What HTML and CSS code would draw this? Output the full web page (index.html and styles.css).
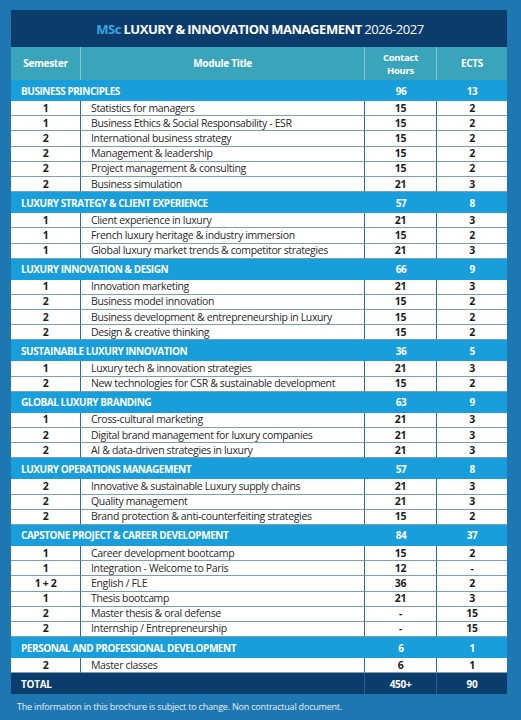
FILE: index.html
```html
<!DOCTYPE html>
<html lang="en">
<head>
<meta charset="utf-8">
<title>MSc Luxury &amp; Innovation Management 2026-2027</title>
<link rel="stylesheet" href="styles.css">
</head>
<body>
<div class="page">
  <table class="curriculum">
    <colgroup>
      <col class="c-sem"><col class="c-mod"><col class="c-hrs"><col class="c-ects">
    </colgroup>
    <thead>
      <tr class="title-row">
        <th colspan="4"><span class="msc">MSc</span> <span class="prog">LUXURY &amp; INNOVATION MANAGEMENT</span> <span class="year">2026-2027</span></th>
      </tr>
      <tr class="head-row">
        <th>Semester</th>
        <th>Module Title</th>
        <th><span class="hl">Contact</span><span class="hl">Hours</span></th>
        <th>ECTS</th>
      </tr>
    </thead>
    <tbody>
      <tr class="sec"><td colspan="2">BUSINESS PRINCIPLES</td><td>96</td><td>13</td></tr>
      <tr class="row"><td>1</td><td>Statistics for managers</td><td>15</td><td>2</td></tr>
      <tr class="row"><td>1</td><td>Business Ethics &amp; Social Responsability - ESR</td><td>15</td><td>2</td></tr>
      <tr class="row"><td>2</td><td>International business strategy</td><td>15</td><td>2</td></tr>
      <tr class="row"><td>2</td><td>Management &amp; leadership</td><td>15</td><td>2</td></tr>
      <tr class="row"><td>2</td><td>Project management &amp; consulting</td><td>15</td><td>2</td></tr>
      <tr class="row"><td>2</td><td>Business simulation</td><td>21</td><td>3</td></tr>

      <tr class="sec"><td colspan="2">LUXURY STRATEGY &amp; CLIENT EXPERIENCE</td><td>57</td><td>8</td></tr>
      <tr class="row"><td>1</td><td>Client experience in luxury</td><td>21</td><td>3</td></tr>
      <tr class="row"><td>1</td><td>French luxury heritage &amp; industry immersion</td><td>15</td><td>2</td></tr>
      <tr class="row"><td>1</td><td>Global luxury market trends &amp; competitor strategies</td><td>21</td><td>3</td></tr>

      <tr class="sec"><td colspan="2">LUXURY INNOVATION &amp; DESIGN</td><td>66</td><td>9</td></tr>
      <tr class="row"><td>1</td><td>Innovation marketing</td><td>21</td><td>3</td></tr>
      <tr class="row"><td>2</td><td>Business model innovation</td><td>15</td><td>2</td></tr>
      <tr class="row"><td>2</td><td>Business development &amp; entrepreneurship in Luxury</td><td>15</td><td>2</td></tr>
      <tr class="row"><td>2</td><td>Design &amp; creative thinking</td><td>15</td><td>2</td></tr>

      <tr class="sec"><td colspan="2">SUSTAINABLE LUXURY INNOVATION</td><td>36</td><td>5</td></tr>
      <tr class="row"><td>1</td><td>Luxury tech &amp; innovation strategies</td><td>21</td><td>3</td></tr>
      <tr class="row"><td>2</td><td>New technologies for CSR &amp; sustainable development</td><td>15</td><td>2</td></tr>

      <tr class="sec"><td colspan="2">GLOBAL LUXURY BRANDING</td><td>63</td><td>9</td></tr>
      <tr class="row"><td>1</td><td>Cross-cultural marketing</td><td>21</td><td>3</td></tr>
      <tr class="row"><td>2</td><td>Digital brand management for luxury companies</td><td>21</td><td>3</td></tr>
      <tr class="row"><td>2</td><td>AI &amp; data-driven strategies in luxury</td><td>21</td><td>3</td></tr>

      <tr class="sec"><td colspan="2">LUXURY OPERATIONS MANAGEMENT</td><td>57</td><td>8</td></tr>
      <tr class="row"><td>2</td><td>Innovative &amp; sustainable Luxury supply chains</td><td>21</td><td>3</td></tr>
      <tr class="row"><td>2</td><td>Quality management</td><td>21</td><td>3</td></tr>
      <tr class="row"><td>2</td><td>Brand protection &amp; anti-counterfeiting strategies</td><td>15</td><td>2</td></tr>

      <tr class="sec"><td colspan="2">CAPSTONE PROJECT &amp; CAREER DEVELOPMENT</td><td>84</td><td>37</td></tr>
      <tr class="row"><td>1</td><td>Career development bootcamp</td><td>15</td><td>2</td></tr>
      <tr class="row"><td>1</td><td>Integration - Welcome to Paris</td><td>12</td><td>-</td></tr>
      <tr class="row"><td>1 + 2</td><td>English / FLE</td><td>36</td><td>2</td></tr>
      <tr class="row"><td>1</td><td>Thesis bootcamp</td><td>21</td><td>3</td></tr>
      <tr class="row"><td>2</td><td>Master thesis &amp; oral defense</td><td>-</td><td>15</td></tr>
      <tr class="row"><td>2</td><td>Internship / Entrepreneurship</td><td>-</td><td>15</td></tr>

      <tr class="sec"><td colspan="2">PERSONAL AND PROFESSIONAL DEVELOPMENT</td><td>6</td><td>1</td></tr>
      <tr class="row"><td>2</td><td>Master classes</td><td>6</td><td>1</td></tr>
    </tbody>
    <tfoot>
      <tr class="total"><td colspan="2">TOTAL</td><td>450+</td><td>90</td></tr>
    </tfoot>
  </table>
  <p class="note">The information in this brochure is subject to change. Non contractual document.</p>
</div>
</body>
</html>
```

FILE: styles.css
```css
html, body {
  margin: 0;
  padding: 0;
}
body {
  background: #1f77b2;
  font-family: "Open Sans", "Noto Sans", "Liberation Sans", sans-serif;
  color: #222;
}
.page {
  padding: 10px 14px 0 11px;
}
.curriculum {
  width: 496px;
  border-collapse: separate;
  border-spacing: 0;
  table-layout: fixed;
}
.c-sem { width: 70px; }
.c-mod { width: 284px; }
.c-hrs { width: 72px; }
.c-ects { width: 70px; }

.curriculum th, .curriculum td {
  padding: 0;
}

/* title */
.title-row th {
  height: 37px;
  background: #0c3c6c;
  color: #fff;
  font-size: 13px;
  letter-spacing: -0.45px;
  word-spacing: -0.5px;
  text-align: center;
  font-weight: normal;
  padding-left: 2px;
}
.msc { color: #35a6df; font-weight: bold; }
.prog { font-weight: bold; }

/* header */
.head-row th {
  height: 33px;
  background: #3aa5ba;
  color: #fff;
  font-size: 10px;
  font-weight: bold;
  line-height: 13px;
  letter-spacing: -0.3px;
  border-right: 1px solid #80c8d4;
  text-align: center;
}
.head-row th:last-child { border-right: none; }
.hl {
  display: block;
  line-height: 13px;
  font-size: 9.5px;
}

/* section rows */
.sec td {
  height: 21px;
  background: #189edb;
  color: #fff;
  font-size: 10px;
  font-weight: bold;
  letter-spacing: -0.45px;
  text-align: center;
}
.sec td:first-child {
  text-align: left;
  padding-left: 10px;
}

/* data rows */
.row td {
  height: 14.2px;
  background: #fff;
  font-size: 10.5px;
  line-height: 13px;
  letter-spacing: -0.35px;
  border-bottom: 1px solid #7d9fb2;
  border-right: 1px solid #2d6d96;
  text-align: center;
  font-weight: bold;
  color: #1e1e1e;
}
.row td:nth-child(2) {
  text-align: left;
  padding-left: 10px;
  font-weight: normal;
  color: #2a2a2a;
  white-space: nowrap;
}
.row td:last-child { border-right: none; }

/* total */
.total td {
  height: 21px;
  background: #0c3c6c;
  color: #fff;
  font-size: 10px;
  font-weight: bold;
  letter-spacing: -0.3px;
  text-align: center;
  border-right: 1px solid #2a5f8e;
}
.total td:first-child {
  text-align: left;
  padding-left: 10px;
}
.total td:last-child { border-right: none; }

.note {
  margin: 6px 0 0 6px;
  font-size: 9px;
  letter-spacing: -0.2px;
  color: #e6eef6;
}
```
